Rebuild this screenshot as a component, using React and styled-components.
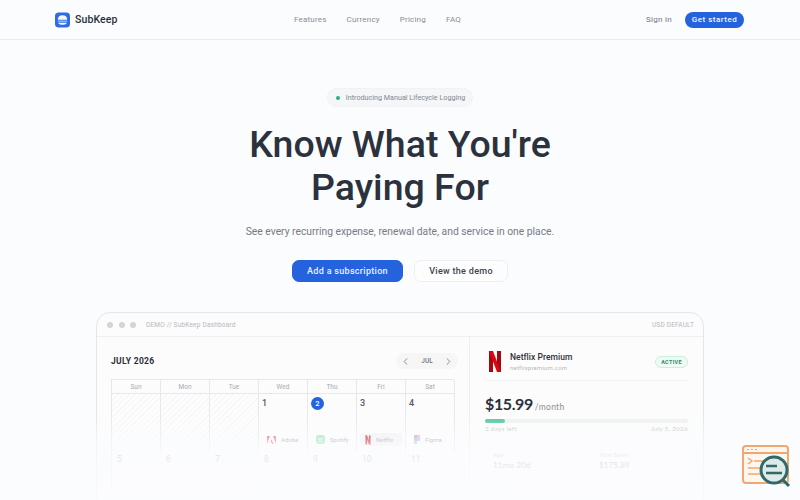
import React from 'react';
import styled, { createGlobalStyle } from 'styled-components';
import { ChevronLeft, ChevronRight } from 'lucide-react';

const Global = createGlobalStyle`
  html, body { margin: 0; padding: 0; height: 100%; overflow: hidden; background: #fbfcfe; }
  * { box-sizing: border-box; }
  body { font-family: "Roboto", "Noto Sans", sans-serif; color: #1f2733; }
`;

const Page = styled.div`
  position: relative;
  width: 800px;
  height: 500px;
  overflow: hidden;
`;

const Nav = styled.header`
  height: 40px;
  padding: 0 56px 0 55px;
  display: flex;
  align-items: center;
  justify-content: space-between;
  border-bottom: 1px solid #e9ecf1;
`;

const Brand = styled.div`
  display: flex;
  align-items: center;
  gap: 5px;
  width: 239px;
  font-size: 10.5px;
  font-weight: 500;
  letter-spacing: 0.1px;
  color: #2a313c;
`;

const NavLinks = styled.nav`
  display: flex;
  gap: 20px;
  flex: 1;
`;

const NavLink = styled.span`
  font-size: 8px;
  letter-spacing: 0.2px;
  color: #878d96;
`;

const NavRight = styled.div`
  display: flex;
  align-items: center;
  gap: 13px;
`;

const SignIn = styled.span`
  font-size: 8px;
  letter-spacing: 0.3px;
  color: #6e7681;
`;

const GetStarted = styled.button`
  height: 16px;
  width: 59px;
  padding: 0;
  border: 0;
  border-radius: 8px;
  background: #2563de;
  color: #f2f6ff;
  font-family: inherit;
  font-size: 8px;
  font-weight: 500;
  letter-spacing: 0.5px;
`;

const Hero = styled.section`
  display: flex;
  flex-direction: column;
  align-items: center;
  padding-top: 48px;
`;

const Pill = styled.div`
  height: 19px;
  padding: 0 7px 0 8px;
  display: flex;
  align-items: center;
  gap: 6px;
  border-radius: 10px;
  background: #f4f6f8;
  border: 1px solid #f0f2f5;
  font-size: 7.2px;
  color: #808791;
`;

const Dot = styled.i`
  width: 4px;
  height: 4px;
  border-radius: 50%;
  background: #23b486;
`;

const Title = styled.h1`
  margin: 16px 0 0;
  font-size: 37.5px;
  line-height: 43px;
  font-weight: 500;
  text-align: center;
  color: #2b323d;
`;

const Sub = styled.p`
  margin: 15px 0 0;
  font-size: 10.3px;
  line-height: 16px;
  color: #747b85;
`;

const Actions = styled.div`
  margin-top: 20px;
  display: flex;
  gap: 11px;
`;

const Cta = styled.button`
  height: 22px;
  width: ${p => p.$w}px;
  padding: 0;
  border-radius: 7px;
  border: 1px solid ${p => (p.$primary ? '#2563de' : '#eceff3')};
  background: ${p => (p.$primary ? '#2563de' : '#fdfdfe')};
  color: ${p => (p.$primary ? '#eaf1ff' : '#3d444e')};
  font-family: inherit;
  font-size: 9px;
  font-weight: 500;
  letter-spacing: 0.3px;
`;

const Demo = styled.section`
  margin: 30px 96px 0;
  height: 240px;
  border: 1px solid #e3e6ea;
  border-radius: 14px 14px 0 0;
  background: #fcfcfc;
  overflow: hidden;
`;

const DemoBar = styled.div`
  height: 24px;
  padding: 0 9px 0 10px;
  display: flex;
  align-items: center;
  border-bottom: 1px solid #edeff2;
  font-size: 6.5px;
  letter-spacing: 0.2px;
  color: #b4b8be;
`;

const Lights = styled.div`
  display: flex;
  gap: 5.5px;
  margin-right: 10px;
`;

const Light = styled.i`
  width: 6px;
  height: 6px;
  border-radius: 50%;
  background: #d2d4d7;
`;

const BarLabel = styled.span`
  flex: 1;
`;

const DemoBody = styled.div`
  display: grid;
  grid-template-columns: 373px 1fr;
`;

const CalendarPane = styled.div`
  padding: 14px 15px 0 14px;
  border-right: 1px solid #eceef1;
  height: 220px;
`;

const CalHead = styled.div`
  height: 20px;
  display: flex;
  align-items: center;
  justify-content: space-between;
  margin-bottom: 8px;
`;

const Month = styled.div`
  font-size: 8.5px;
  font-weight: 700;
  letter-spacing: 0.3px;
  color: #2a303a;
`;

const Stepper = styled.div`
  width: 62px;
  height: 16px;
  margin-right: -4px;
  border-radius: 8px;
  background: #f6f6f7;
  display: flex;
  align-items: center;
  justify-content: space-between;
  padding: 0 4px;
  font-size: 6.5px;
  font-weight: 500;
  color: #6f757d;
  svg { color: #7f858d; }
`;

const Grid = styled.div`
  width: 343px;
  display: grid;
  grid-template-columns: repeat(7, 49px);
  grid-template-rows: 14px 58px 40px;
  border: solid #e6e8eb;
  border-width: 1px 0 0 1px;
`;

const DayName = styled.div`
  display: flex;
  align-items: center;
  justify-content: center;
  border: solid #e6e8eb;
  border-width: 0 1px 1px 0;
  font-size: 6.5px;
  color: #a7abb1;
`;

const Cell = styled.div`
  position: relative;
  padding: 4px 3px;
  border-right: 1px solid #e6e8eb;
  font-size: 9px;
  font-weight: 500;
  color: #555b64;
  background: ${p => (p.$empty
    ? 'repeating-linear-gradient(135deg, #f6f7f8 0 1px, #fdfdfd 1px 4px)'
    : 'transparent')};
`;

const Today = styled.span`
  display: flex;
  align-items: center;
  justify-content: center;
  width: 13px;
  height: 13px;
  margin: -1px 0 0;
  border-radius: 50%;
  background: #2563de;
  color: #fff;
  font-size: 7.5px;
  font-weight: 500;
`;

const Sub2 = styled.div`
  position: absolute;
  left: 3px;
  right: 3px;
  top: 39px;
  height: 13px;
  padding-left: 5px;
  display: flex;
  align-items: center;
  gap: 5px;
  border-radius: 3px;
  background: ${p => (p.$active ? '#f1f1f2' : 'transparent')};
  font-size: 6px;
  font-weight: 400;
  color: #8e9298;
`;

const LaterDay = styled.div`
  padding: 2px 5px;
  font-size: 8.5px;
  color: #a8acb1;
`;

const DetailPane = styled.div`
  padding: 10px 15px 0 15px;
`;

const DetailHead = styled.div`
  height: 34px;
  margin-bottom: 12px;
  padding: 0 0 4px 3px;
  display: flex;
  align-items: center;
  gap: 8px;
  border-bottom: 1px solid #f0f1f3;
`;

const DetailName = styled.div`
  flex: 1;
  font-size: 8.5px;
  font-weight: 500;
  letter-spacing: 0.05px;
  color: #2c323b;
`;

const DetailUrl = styled.div`
  margin-top: 2px;
  font-size: 6px;
  font-weight: 400;
  letter-spacing: 0.2px;
  color: #b5b8bd;
`;

const Badge = styled.span`
  width: 33px;
  height: 12px;
  display: flex;
  align-items: center;
  justify-content: center;
  border: 1px solid #c9efdd;
  border-radius: 6px;
  background: #effaf5;
  font-size: 5.5px;
  font-weight: 700;
  letter-spacing: 0.3px;
  color: #2d8c66;
`;

const Price = styled.div`
  display: flex;
  align-items: baseline;
  gap: 2px;
  font-family: "Lato", sans-serif;
  font-size: 16px;
  letter-spacing: -0.4px;
  line-height: 22px;
  font-weight: 700;
  color: #2a3039;
`;

const Per = styled.span`
  font-size: 8.5px;
  font-weight: 400;
  letter-spacing: 0.3px;
  color: #8b9096;
`;

const Track = styled.div`
  margin-top: 1px;
  height: 4px;
  border-radius: 2px;
  background: #eff0f1;
`;

const Fill = styled.div`
  height: 100%;
  width: 20px;
  border-radius: 2px;
  background: #52c79c;
`;

const Meta = styled.div`
  margin-top: 2px;
  display: flex;
  justify-content: space-between;
  font-family: "Lato", sans-serif;
  font-size: 6.5px;
  letter-spacing: 0.2px;
  color: #c2c5c9;
`;

const Stats = styled.div`
  margin-top: 19px;
  padding-left: 8px;
  display: grid;
  grid-template-columns: 106px 1fr;
  font-family: "Lato", sans-serif;
  font-size: 6px;
  color: #c4c6c9;
`;

const StatValue = styled.div`
  margin-top: 2px;
  font-size: 8px;
  letter-spacing: 0.2px;
  color: #9a9ea4;
`;

const Fade = styled.div`
  position: absolute;
  left: 0;
  right: 0;
  top: 415px;
  height: 85px;
  pointer-events: none;
  background: linear-gradient(to bottom, rgba(251, 252, 254, 0) 0, rgba(251, 252, 254, 0.7) 32px, rgba(251, 252, 254, 0.85) 85px);
`;

const Widget = styled.div`
  position: absolute;
  left: 741px;
  top: 444px;
  width: 50px;
  height: 46px;
`;

const Logo = () => (
  <svg width="15" height="16" viewBox="0 0 16 16">
    <rect width="16" height="16" rx="4" fill="#2f6be4" />
    <path d="M3 7.600C3 4.600 5 3 8 3s5 1.600 5 4.600z" fill="#f3f6fd" />
    <rect x="3" y="8.600" width="10" height="1.300" fill="#a9c6f5" />
    <path d="M3.400 10.800h9.200C12.200 12.400 10.400 13 8 13s-4.200-.6-4.600-2.200z" fill="#f3f6fd" />
  </svg>
);

const NetflixMark = ({ w = 14, h = 21 }) => (
  <svg width={w} height={h} viewBox="0 0 14 21">
    <path d="M1 0h4v21l-4 0z" fill="#a70710" />
    <path d="M9 0h4v21h-4z" fill="#a70710" />
    <path d="M1 0h4l8 21h-4z" fill="#d80813" />
  </svg>
);

const AdobeMark = () => (
  <svg width="9" height="8" viewBox="0 0 9 8">
    <path d="M0 0h3L0 8zM9 0H6l3 8zM4.500 3l2 5H5.200L4.600 6.500H3.400z" fill="#e2606a" />
  </svg>
);

const SpotifyMark = () => (
  <svg width="9" height="9" viewBox="0 0 9 9">
    <rect width="9" height="9" rx="3" fill="#8fe0b0" />
    <path d="M2 3.200h5M2.400 4.800h4.200M2.800 6.300h3.400" stroke="#eafaf1" strokeWidth=".8" />
  </svg>
);

const FigmaMark = () => (
  <svg width="6" height="9" viewBox="0 0 6 9">
    <path d="M0 0h3v3H0z" fill="#ef8d78" />
    <path d="M3 0h3v3H3z" fill="#f3a99a" />
    <path d="M0 3h3v3H0z" fill="#b7a1ee" />
    <path d="M3 3h3v3H3z" fill="#8bcdf0" />
    <path d="M0 6h3v3H0z" fill="#8fdcb8" />
  </svg>
);

const subs = [
  { day: 1, name: 'Adobe', icon: <AdobeMark /> },
  { day: 2, name: 'Spotify', icon: <SpotifyMark />, today: true },
  { day: 3, name: 'Netflix', icon: <NetflixMark w={6} h={10} />, active: true },
  { day: 4, name: 'Figma', icon: <FigmaMark /> },
];

const days = ['Sun', 'Mon', 'Tue', 'Wed', 'Thu', 'Fri', 'Sat'];
const later = [5, 6, 7, 8, 9, 10, 11];

const App = () => (
  <Page>
    <Global />
    <Nav>
      <Brand><Logo />SubKeep</Brand>
      <NavLinks>
        <NavLink>Features</NavLink>
        <NavLink>Currency</NavLink>
        <NavLink>Pricing</NavLink>
        <NavLink>FAQ</NavLink>
      </NavLinks>
      <NavRight>
        <SignIn>Sign in</SignIn>
        <GetStarted>Get started</GetStarted>
      </NavRight>
    </Nav>

    <Hero>
      <Pill><Dot />Introducing Manual Lifecycle Logging</Pill>
      <Title>Know What You're<br />Paying For</Title>
      <Sub>See every recurring expense, renewal date, and service in one place.</Sub>
      <Actions>
        <Cta $primary $w={111}>Add a subscription</Cta>
        <Cta $w={94}>View the demo</Cta>
      </Actions>
    </Hero>

    <Demo>
      <DemoBar>
        <Lights><Light /><Light /><Light /></Lights>
        <BarLabel>DEMO // SubKeep Dashboard</BarLabel>
        USD DEFAULT
      </DemoBar>
      <DemoBody>
        <CalendarPane>
          <CalHead>
            <Month>JULY 2026</Month>
            <Stepper>
              <ChevronLeft size={11} />
              JUL
              <ChevronRight size={11} />
            </Stepper>
          </CalHead>
          <Grid>
            {days.map(d => <DayName key={d}>{d}</DayName>)}
            <Cell $empty />
            <Cell $empty />
            <Cell $empty />
            {subs.map(s => (
              <Cell key={s.day}>
                {s.today ? <Today>{s.day}</Today> : s.day}
                <Sub2 $active={s.active}>{s.icon}{s.name}</Sub2>
              </Cell>
            ))}
            {later.map(d => <LaterDay key={d}>{d}</LaterDay>)}
          </Grid>
        </CalendarPane>
        <DetailPane>
          <DetailHead>
            <NetflixMark />
            <DetailName>
              Netflix Premium
              <DetailUrl>netflixpremium.com</DetailUrl>
            </DetailName>
            <Badge>ACTIVE</Badge>
          </DetailHead>
          <Price>$15.99 <Per>/month</Per></Price>
          <Track><Fill /></Track>
          <Meta><span>3 days left</span><span>July 5, 2026</span></Meta>
          <Stats>
            <div>Age<StatValue>11mo 20d</StatValue></div>
            <div>Total Spent<StatValue>$175.89</StatValue></div>
          </Stats>
        </DetailPane>
      </DemoBody>
    </Demo>

    <Fade />

    <Widget>
      <svg width="50" height="46" viewBox="0 0 50 46" fill="none">
        <rect x="2" y="2" width="45" height="37" rx="3" fill="#fdf6ee" stroke="#efa86f" strokeWidth="2" />
        <path d="M2 9h45" stroke="#efa86f" strokeWidth="2" />
        <path d="M6 5.500h2M10 5.500h2M14 5.500h2" stroke="#efa86f" strokeWidth="1" />
        <path d="M7 14l4 3-4 3" stroke="#efa86f" strokeWidth="1.500" />
        <path d="M13 17h14M7 24h20M7 30h18" stroke="#efa86f" strokeWidth="1.500" />
        <circle cx="33" cy="26" r="13" fill="#dfe9e7" stroke="#2c6a6b" strokeWidth="3" />
        <path d="M25 22h11M25 29h16" stroke="#2c6a6b" strokeWidth="2.400" />
        <path d="M42 36l6 6" stroke="#2c6a6b" strokeWidth="3" />
      </svg>
    </Widget>
  </Page>
);

export default App;
